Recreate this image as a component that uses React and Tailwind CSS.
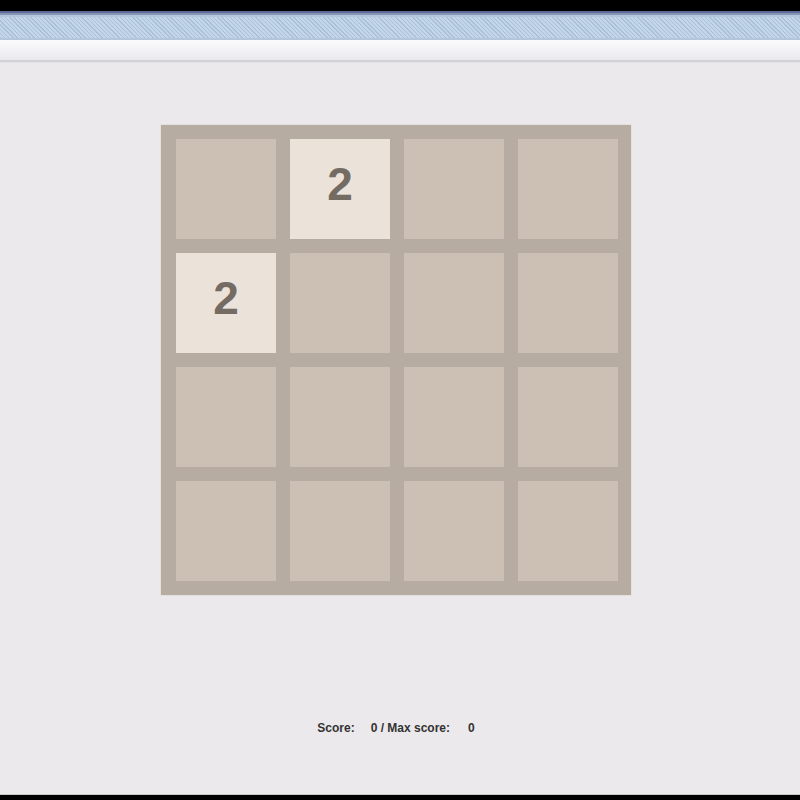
import React from "react";

const cells = [
  [0, 2, 0, 0],
  [2, 0, 0, 0],
  [0, 0, 0, 0],
  [0, 0, 0, 0],
];

export default function App() {
  return (
    <div className="w-[800px] h-[800px] flex flex-col bg-[#ebe9ec] overflow-hidden" style={{ fontFamily: '"Liberation Sans", Arial, sans-serif' }}>
      <div className="h-[11px] bg-black shrink-0" />
      <div className="h-[2px] bg-[#5d6a98] shrink-0" />
      <div className="h-[2px] bg-[#8796b8] shrink-0" />
      <div className="h-[2px] bg-[#b4c6dc] shrink-0" />
      <div
        className="h-[21px] shrink-0 bg-[#c3d5e8]"
        style={{
          backgroundImage:
            "repeating-linear-gradient(45deg, rgba(150,175,205,0.55) 0px, rgba(150,175,205,0.55) 1px, transparent 1px, transparent 3px)",
        }}
      />
      <div className="h-[2px] bg-[#b3c5d8] shrink-0" />
      <div className="h-[20px] shrink-0 bg-gradient-to-b from-[#fbfbfd] to-[#e9e8ec]" />
      <div className="h-[2px] bg-[#d2d1d6] shrink-0" />
      <div className="h-[1px] bg-[#e2e1e5] shrink-0" />
      <div className="flex-1 flex flex-col items-center pt-[62px]">
        <div className="ml-[-9px] w-[470px] h-[470px] bg-[#b6aca1] pt-[14px] pb-[14px] pl-[15px] pr-[13px] grid grid-cols-4 gap-[14px] outline outline-1 outline-[#e4e0dc]">
          {cells.flat().map((v, i) => (
            <div
              key={i}
              className={
                v
                  ? "w-[100px] h-[100px] bg-[#ebe3da] flex items-center justify-center"
                  : "w-[100px] h-[100px] bg-[#ccc0b4]"
              }
            >
              {v ? (
                <span className="text-[46px] font-bold text-[#746b63] leading-none pb-[10px] pl-[1px]">{v}</span>
              ) : null}
            </div>
          ))}
        </div>
        <div className="mt-[124px] ml-[-8px] text-[12px] font-bold text-[#333333] flex whitespace-pre">
          <span>Score:</span>
          <span className="ml-[16px]">0 / Max score:</span>
          <span className="ml-[18px]">0</span>
        </div>
      </div>
      <div className="h-[1px] bg-[#c8c8c8] shrink-0" />
      <div className="h-[5px] bg-black shrink-0" />
    </div>
  );
}
